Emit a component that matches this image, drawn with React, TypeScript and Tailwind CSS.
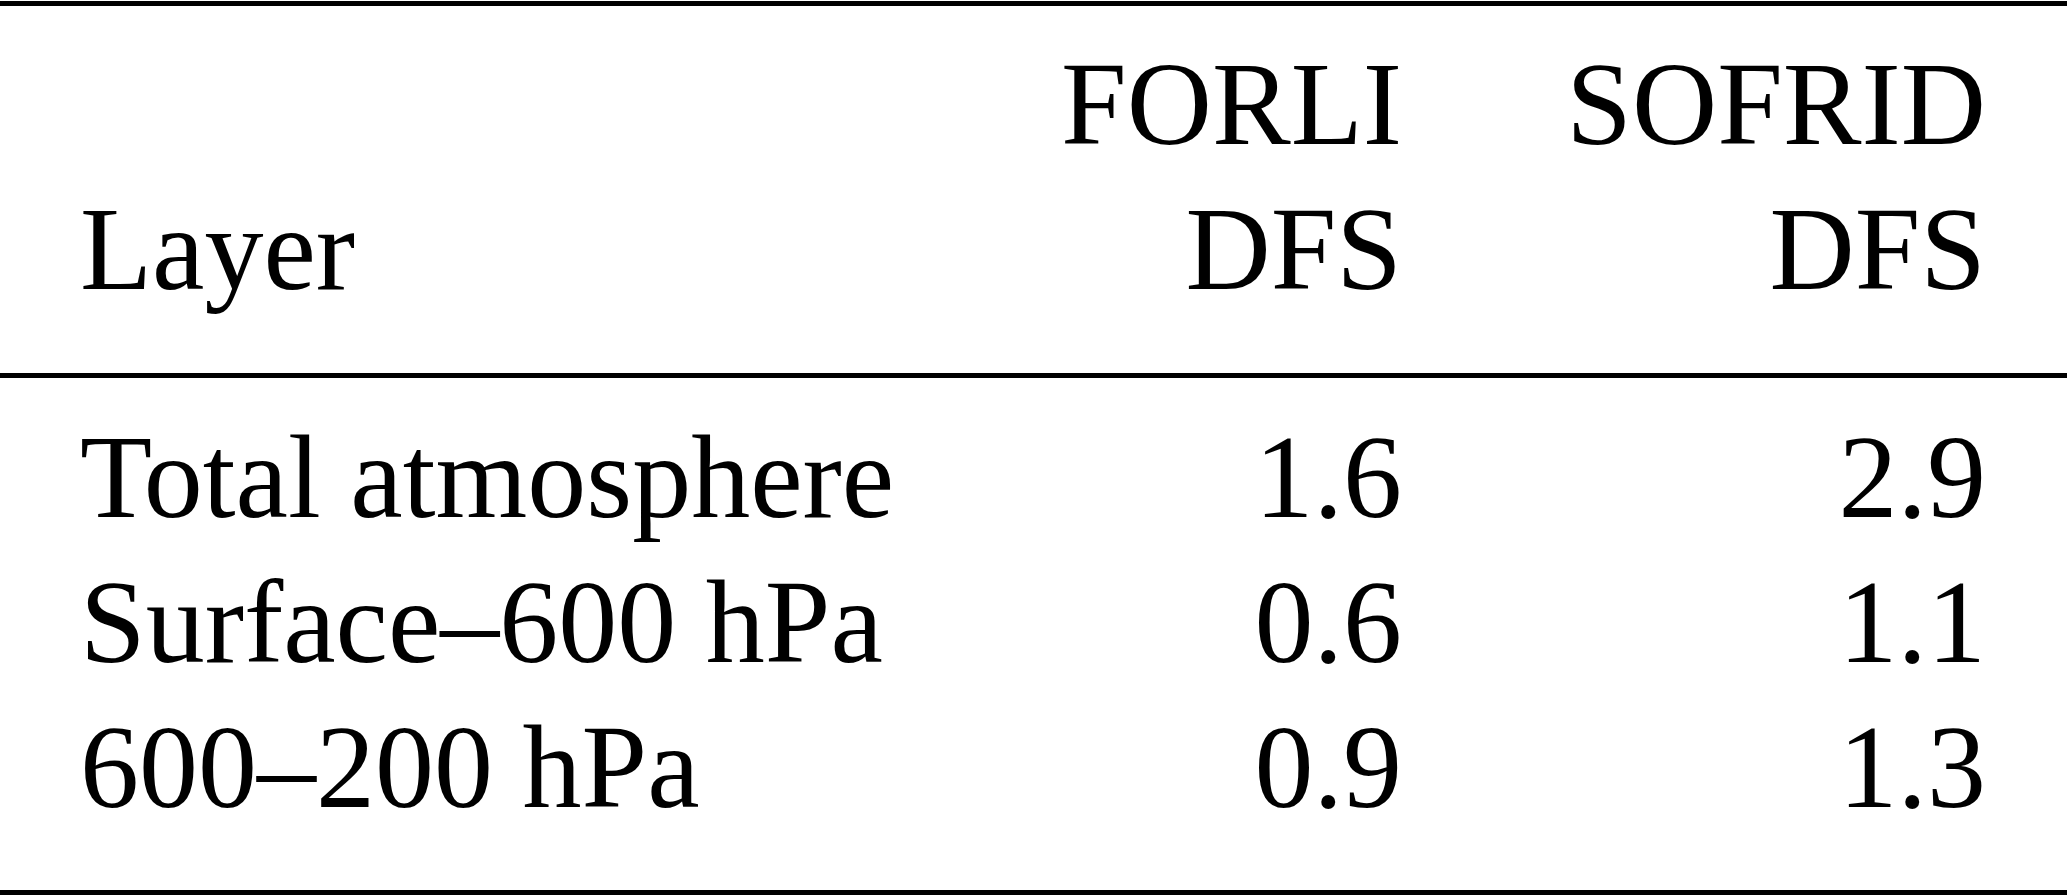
import React from "react";

type Row = { layer: string; forli: string; sofrid: string };

const rows: Row[] = [
  { layer: "Total atmosphere", forli: "1.6", sofrid: "2.9" },
  { layer: "Surface–600 hPa", forli: "0.6", sofrid: "1.1" },
  { layer: "600–200 hPa", forli: "0.9", sofrid: "1.3" },
];

const Rule: React.FC = () => <div className="h-[5px] bg-black" />;

const App: React.FC = () => {
  return (
    <div className="w-[2067px] h-[895px] bg-white text-black font-['Liberation_Serif','Times_New_Roman',serif] text-[118px] leading-[145px] overflow-hidden">
      <div className="pt-px">
        <Rule />

        {/* header */}
        <div className="grid grid-cols-[1fr_348px_584px] pl-[80px] pr-[81px] pt-[26px] pb-[51px]">
          <div className="self-end">Layer</div>
          <div className="text-right">
            <div>FORLI</div>
            <div>DFS</div>
          </div>
          <div className="text-right">
            <div>SOFRID</div>
            <div>DFS</div>
          </div>
        </div>

        <Rule />

        {/* body */}
        <div className="grid grid-cols-[1fr_348px_584px] pl-[80px] pr-[81px] pt-[27px] pb-[50px]">
          {rows.map((r) => (
            <React.Fragment key={r.layer}>
              <div className="whitespace-nowrap">{r.layer}</div>
              <div className="text-right">{r.forli}</div>
              <div className="text-right">{r.sofrid}</div>
            </React.Fragment>
          ))}
        </div>

        <Rule />
      </div>
    </div>
  );
};

export default App;
